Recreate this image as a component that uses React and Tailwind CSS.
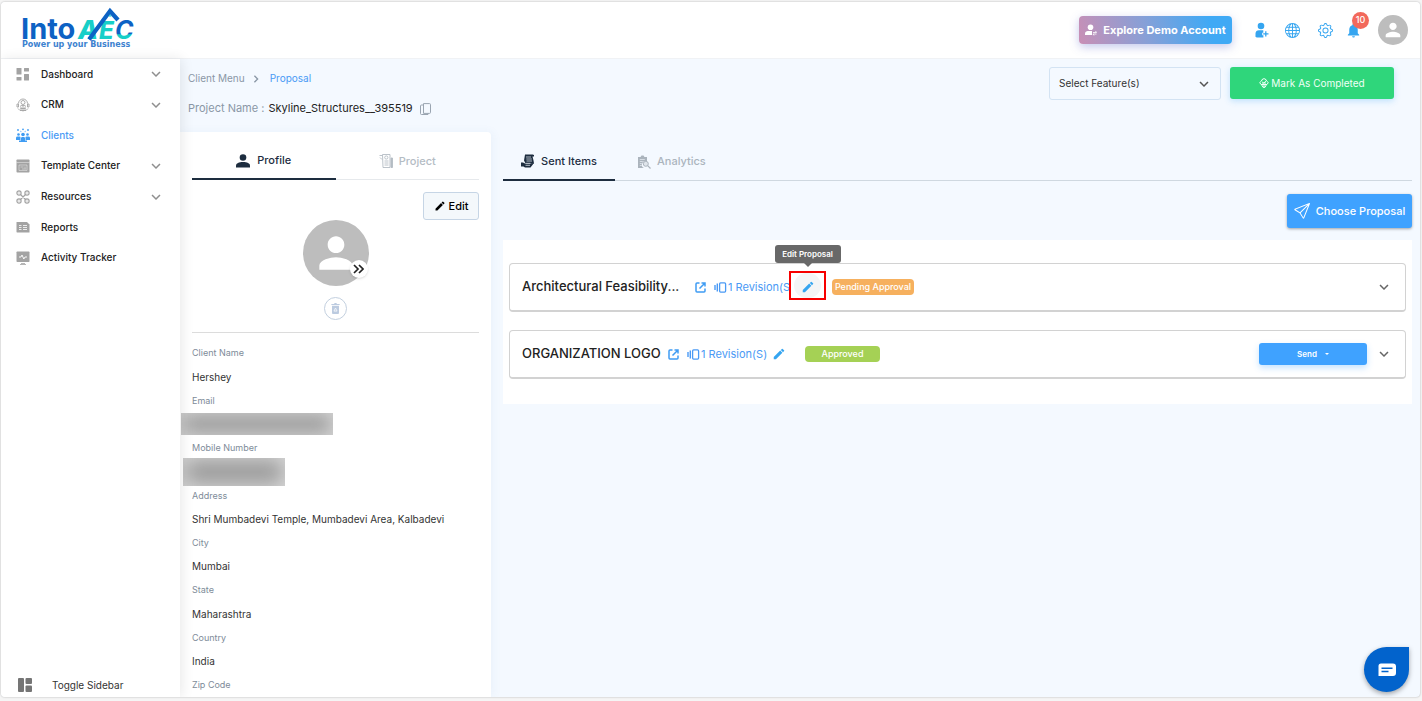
import React, { useState } from 'react';
import { MdEdit, MdKeyboardArrowDown, MdNotifications, MdPerson } from 'react-icons/md';
import { BsGear, BsGlobe, BsSend } from 'react-icons/bs';

const DashboardIcon = () => (
    <svg viewBox="0 0 14 14" className="w-3.5 h-3.5" fill="currentColor" aria-hidden="true">
        <rect x="0.5" y="1" width="5" height="6.5" rx="0.5" />
        <rect x="8" y="1" width="5" height="3.5" rx="0.5" />
        <rect x="0.5" y="10" width="5" height="3.5" rx="0.5" />
        <rect x="8" y="7" width="5" height="6.5" rx="0.5" />
    </svg>
);

const CrmIcon = () => (
    <svg viewBox="0 0 14 14" className="w-3.5 h-3.5" fill="none" stroke="currentColor" strokeWidth="0.9" aria-hidden="true">
        <path d="M2.5 5.5a4.5 4.5 0 0 1 9 0M1 6v3h1.5V6zM11.5 6v3H13V6z" />
        <circle cx="7" cy="4.5" r="2" />
        <path d="M4 8.5c.5-1.5 5.5-1.5 6 0M2 10.5l2 2h6l2-2M5 9v3.5M9 9v3.5M7 8v5.5M4.5 10.5h5" />
    </svg>
);

const ClientsIcon = () => (
    <svg viewBox="0 0 14 14" className="w-3.5 h-3.5" fill="currentColor" aria-hidden="true">
        <circle cx="2" cy="2" r="0.9" />
        <circle cx="7" cy="1.3" r="0.9" />
        <circle cx="12" cy="2" r="0.9" />
        <path d="M4 2.5l1.5 1L5 4.5zM10 2.5l-1.5 1 .5 1z" />
        <circle cx="2.5" cy="6.5" r="1.3" />
        <circle cx="11.5" cy="6.5" r="1.3" />
        <circle cx="7" cy="6.5" r="1.8" />
        <path d="M0 12V9.8a1.5 1.5 0 0 1 1.5-1.3h2A1.5 1.5 0 0 1 4.5 9v3zM9.5 12V9a1.5 1.5 0 0 1 1-.5h2A1.5 1.5 0 0 1 14 9.8V12zM5 14V10a1.2 1.2 0 0 1 1.2-1h1.6A1.2 1.2 0 0 1 9 10v4zM3 12.5h8V14H3z" />
    </svg>
);

const TemplateIcon = () => (
    <svg viewBox="0 0 14 14" className="w-3.5 h-3.5" aria-hidden="true">
        <rect x="0.5" y="0.5" width="13" height="13" rx="0.8" fill="currentColor" />
        <path d="M0.5 3.5h13M3 6h8v5.5H3zM4.5 8h3M6 10h4M9 7.5v2" stroke="#fff" strokeWidth="0.6" fill="none" opacity="0.7" />
    </svg>
);

const ResourcesIcon = () => (
    <svg viewBox="0 0 14 14" className="w-3.5 h-3.5" fill="none" stroke="currentColor" strokeWidth="1.2" aria-hidden="true">
        <circle cx="3" cy="3" r="2.1" />
        <circle cx="11" cy="3" r="2.1" />
        <circle cx="3" cy="11" r="2.1" />
        <circle cx="11" cy="11" r="2.1" />
        <path d="M4.5 4.5l5 5M9.5 4.5l-5 5M2.5 3h1M10.5 3h1M2.5 11h1M10.5 11h1" />
    </svg>
);

const ReportsIcon = () => (
    <svg viewBox="0 0 14 14" className="w-3.5 h-3.5" aria-hidden="true">
        <path d="M1 2h10l2.5 2.5v8H1a.6.6 0 0 1-.5-.5V2.5A.6.6 0 0 1 1 2z" fill="currentColor" />
        <path d="M3 5.5h2.5M3 7.5h2.5M3 9.5h2.5M7 5.5h4M7 7.5h4M7 9.5h4" stroke="#fff" strokeWidth="0.8" />
    </svg>
);

const ActivityIcon = () => (
    <svg viewBox="0 0 14 14" className="w-3.5 h-3.5" aria-hidden="true">
        <rect x="0.5" y="0.5" width="13" height="10.5" rx="0.8" fill="currentColor" />
        <path d="M5 12.5h4M4 13.5h6" stroke="currentColor" strokeWidth="0.8" />
        <path d="M3 6h2l1-2 1.8 4L9 6h2" stroke="#fff" strokeWidth="0.9" fill="none" />
    </svg>
);

const LayoutIcon = () => (
    <svg viewBox="0 0 14 14" className="w-3.5 h-3.5" fill="currentColor" aria-hidden="true">
        <rect x="0" y="0" width="6" height="14" rx="1" />
        <rect x="7.5" y="0" width="6.5" height="6" rx="1" />
        <rect x="7.5" y="7.5" width="6.5" height="6.5" rx="1" />
    </svg>
);

const UserPlusIcon = () => (
    <svg viewBox="0 0 14 16" className="w-3.5 h-4" fill="currentColor" aria-hidden="true">
        <circle cx="6" cy="4" r="3.3" />
        <path d="M.5 13.5v-2A3.5 3.5 0 0 1 4 8.3h4.3v2.5H7.2v2.4h1.2v2.2H2A1.5 1.5 0 0 1 .5 13.5z" />
        <path d="M10.8 9.2v5.4M8.2 11.9h5.3" stroke="currentColor" strokeWidth="1.3" />
    </svg>
);

const DemoUserIcon = () => (
    <svg viewBox="0 0 12 12" className="w-3 h-3" fill="currentColor" aria-hidden="true">
        <circle cx="5.5" cy="3.3" r="2.8" />
        <path d="M0 11V9.5C0 7.5 2 7 4 7h3v4z" />
        <path d="M8 8.5h3.5L10.5 7M11.5 10H8l1 1.5" stroke="currentColor" strokeWidth="0.8" fill="none" />
    </svg>
);

const PersonIcon = () => (
    <svg viewBox="0 0 14 14" className="w-3.5 h-3.5" fill="currentColor" aria-hidden="true">
        <circle cx="7" cy="3.5" r="3.3" />
        <path d="M0 13.5v-1.8C0 9 3 7.9 7 7.9s7 1.1 7 3.8v1.8z" />
    </svg>
);

const ProjectIcon = () => (
    <svg viewBox="0 0 14 14" className="w-3.5 h-3.5" fill="none" stroke="currentColor" strokeWidth="0.9" aria-hidden="true">
        <path d="M.5 1.5h3M1 3.5l2 2M3.5.5H11v13H4z" />
        <circle cx="7.3" cy="3.5" r="1.6" />
        <path d="M5.5 7h4M5.5 9h4M5.5 11h4" />
        <path d="M12 4h1.5v9.5H12z" fill="currentColor" />
    </svg>
);

const SentIcon = () => (
    <svg viewBox="0 0 14 14" className="w-3.5 h-3.5" aria-hidden="true">
        <path d="M4 .5h8a1.5 1.5 0 0 1 1 2h-1.5l1 4 .5 3H4.5L3 6.5z" fill="currentColor" />
        <path d="M0 8.5h2l2 1h4.5L13 9l-3.5 4.5H4l-1.5-1H0z" fill="currentColor" />
        <path d="M5 3h5M5.3 5h5.5M5.5 7H11M4.5 9.3h5M4.5 11.3H9" stroke="#f4f9ff" strokeWidth="0.7" />
    </svg>
);

const AnalyticsIcon = () => (
    <svg viewBox="0 0 14 14" className="w-3.5 h-3.5" aria-hidden="true">
        <path d="M1 2h2.500l1-1.500h2l1 1.500H10v4.500A3.500 3.500 0 0 0 7 13H1z" fill="currentColor" />
        <path d="M2.800 4.500h5M2.800 6.500h3M2.800 8.500h2M2.800 10.500h2" stroke="#f4f9ff" strokeWidth="0.6" />
        <circle cx="8.8" cy="8.8" r="2.5" fill="#dfe5eb" stroke="currentColor" strokeWidth="1" />
        <path d="M10.7 10.7l2.8 2.8" stroke="currentColor" strokeWidth="1.2" />
    </svg>
);

const CopyIcon = () => (
    <svg viewBox="0 0 11 12" className="w-[11px] h-3" fill="none" stroke="#9aa5b1" strokeWidth="1" aria-hidden="true">
        <path d="M3.5.6h6a1 1 0 0 1 1 1v7.8a1 1 0 0 1-1 1h-6z" />
        <path d="M3.5 2h-2a1 1 0 0 0-1 1v7.5a1 1 0 0 0 1 1H8v-1" />
    </svg>
);

const ExternalIcon = () => (
    <svg viewBox="0 0 11 11" className="w-[11px] h-[11px]" fill="none" stroke="currentColor" strokeWidth="1.5" aria-hidden="true">
        <path d="M4.5 1H2a1 1 0 0 0-1 1v7a1 1 0 0 0 1 1h7a1 1 0 0 0 1-1V6.500" />
        <path d="M6.5 1H10v3.5M10 1L4.5 6.5" />
    </svg>
);

const RevisionIcon = () => (
    <svg viewBox="0 0 13 11" className="w-[13px] h-[11px] shrink-0" fill="none" stroke="currentColor" aria-hidden="true">
        <path d="M1 3v5M3.3 1.5v8" strokeWidth="1.4" />
        <rect x="5.6" y="0.9" width="6" height="9.2" rx="1" strokeWidth="1.3" />
    </svg>
);

const BadgeCheckIcon = () => (
    <svg viewBox="0 0 10 10" className="w-2.5 h-2.5" fill="none" stroke="currentColor" strokeWidth="1" aria-hidden="true">
        <path d="M5 .6l2 1 .5 1.4 1.8 1.5L8 6.5H2L.7 4.5 2.5 3 3 1.6z" />
        <path d="M3.3 4l1.5 1.2L7 2.8M2.5 6.5L4 9.3h2l1.500-2.800M5 6v3.500M3 5h4" />
    </svg>
);

const BinIcon = () => (
    <svg viewBox="0 0 9 12" className="w-[9px] h-[11px]" aria-hidden="true">
        <path d="M0 1h3l.5-1h2L6 1h3v1.3H0zM.7 3h7.6v8a1 1 0 0 1-1 1H1.7a1 1 0 0 1-1-1z" fill="#bccbe0" />
        <path d="M2.8 8.8l1.7-3.3 1.7 3.3z" fill="none" stroke="#fff" strokeWidth="0.8" />
    </svg>
);

const DoubleChevron = () => (
    <svg viewBox="0 0 11 10" className="w-[11px] h-2.5" fill="none" stroke="#222" strokeWidth="1.7" aria-hidden="true">
        <path d="M1 1l4 4-4 4M6 1l4 4-4 4" />
    </svg>
);

const ChatIcon = () => (
    <svg viewBox="0 0 18 14" className="w-[18px] h-3.5" aria-hidden="true">
        <path d="M3 .5h12a3 3 0 0 1 3 3V10a3 3 0 0 1-3 3H.5V3A2.5 2.5 0 0 1 3 .5z" fill="#fff" />
        <path d="M3.5 5.3h11M3.5 8.5h7" stroke="#0263cc" strokeWidth="1.5" />
    </svg>
);

const Logo = () => (
    <svg viewBox="0 0 114 42" className="w-[114px] h-[42px] overflow-visible" role="img" aria-label="IntoAEC" fontFamily="Inter, sans-serif">
        <defs>
            <linearGradient id="cFill" x1="0" y1="0" x2="0" y2="1">
                <stop offset="0.62" stopColor="#0d62c4" />
                <stop offset="0.66" stopColor="#17cfc8" />
            </linearGradient>
        </defs>
        <text x="0" y="31" fontSize="29" fontWeight="700" fill="#0d62c4">Into</text>
        <text x="57" y="31" fontSize="26" fontWeight="800" fontStyle="italic" fill="#17cfc8">A</text>
        <text x="78" y="31" fontSize="24" fontWeight="800" fontStyle="italic" fill="#17cfc8">E</text>
        <text x="94" y="31" fontSize="25" fontWeight="700" fontStyle="italic" fill="url(#cFill)">C</text>
        <path d="M68 31.5L89 3l8 9" fill="none" stroke="#0d62c4" strokeWidth="4.2" />
        <path d="M87.5 8.5l1.5-2 1.5 2z" fill="#17cfc8" />
        <text x="1" y="39" fontSize="8" fontWeight="700" fontFamily="DejaVu Sans, sans-serif" fill="#3d82cf">Power up your Business</text>
    </svg>
);

const menu = [
    { label: 'Dashboard', icon: DashboardIcon, children: true },
    { label: 'CRM', icon: CrmIcon, children: true },
    { label: 'Clients', icon: ClientsIcon, active: true },
    { label: 'Template Center', icon: TemplateIcon, children: true },
    { label: 'Resources', icon: ResourcesIcon, children: true },
    { label: 'Reports', icon: ReportsIcon },
    { label: 'Activity Tracker', icon: ActivityIcon },
];

const fields = [
    { label: 'Client Name', value: 'Hershey' },
    { label: 'Email', hidden: 'email' },
    { label: 'Mobile Number', hidden: 'phone' },
    { label: 'Address', value: 'Shri Mumbadevi Temple, Mumbadevi Area, Kalbadevi' },
    { label: 'City', value: 'Mumbai' },
    { label: 'State', value: 'Maharashtra' },
    { label: 'Country', value: 'India' },
    { label: 'Zip Code', value: '' },
];

const Header = () => (
    <header className="flex h-[57px] shrink-0 items-center border-b border-[#f0f2f5] bg-white pl-5 pr-3">
        <a href="#home" className="self-start pt-1.5"><Logo /></a>
        <button className="ml-auto flex h-7 w-[153px] items-center justify-center gap-1.5 rounded bg-linear-[75deg] from-[#c98fb5] via-[#85a0d8] via-45% to-[#3fa9f5] to-85% text-[11px] font-bold whitespace-nowrap text-white shadow-[0_3px_10px_rgba(90,100,200,0.35)]">
            <DemoUserIcon />
            Explore Demo Account
        </button>
        <div className="ml-[23px] flex items-center text-[#35a5f0]">
            <button aria-label="Add user"><UserPlusIcon /></button>
            <button aria-label="Language" className="ml-4"><BsGlobe className="h-[15px] w-[15px]" /></button>
            <button aria-label="Settings" className="ml-[18px]"><BsGear className="h-[15px] w-[15px]" /></button>
            <button aria-label="Notifications" className="relative ml-3">
                <MdNotifications className="h-[17px] w-[17px]" />
                <span className="absolute -top-2.5 left-[7px] flex h-[17px] w-[17px] items-center justify-center rounded-full bg-[#f2695c] text-[9px] font-medium text-white">10</span>
            </button>
            <button aria-label="Account" className="ml-4 flex h-[30px] w-[30px] items-center justify-center rounded-full bg-[#bdbdbd] text-white">
                <MdPerson className="h-[22px] w-[22px]" />
            </button>
        </div>
    </header>
);

const Sidebar = () => (
    <aside className="z-10 flex w-[179px] shrink-0 flex-col bg-white shadow-[2px_0_12px_rgba(0,0,0,0.09)]">
        <nav className="flex h-[214px] flex-col justify-between">
            {menu.map(({ label, icon: Icon, children, active }) => (
                <a
                    key={label}
                    href="#menu"
                    className={active ? 'flex h-[30px] items-center px-[15px] text-[#4a9af5]' : 'flex h-[30px] items-center px-[15px] text-[#222]'}
                >
                    <span className={active ? 'text-[#3f9cf3]' : 'text-[#a3a3a3]'}><Icon /></span>
                    <span className="ml-[11px] text-[10px] font-medium">{label}</span>
                    {children && <MdKeyboardArrowDown className="ml-auto h-[18px] w-[18px] text-[#8f8f8f]" />}
                </a>
            ))}
        </nav>
        <button className="mt-auto flex h-6 items-center pl-[17px] text-[10px] text-[#333]">
            <span className="text-[#757575]"><LayoutIcon /></span>
            <span className="ml-5">Toggle Sidebar</span>
        </button>
    </aside>
);

const Toolbar = () => (
    <div className="flex items-start justify-between pt-2 pr-[26px] pl-2">
        <div className="pt-0.5">
            <nav className="flex h-[19px] items-center text-[10px] text-[#8a97a6]">
                <a href="#clients">Client Menu</a>
                <svg viewBox="0 0 6 10" className="mr-[11px] ml-2 h-2 w-1.5" fill="none" stroke="#8a97a6" strokeWidth="1.7" aria-hidden="true">
                    <path d="M1 1l4 4-4 4" />
                </svg>
                <a href="#proposal" className="text-[#4a9af5]">Proposal</a>
            </nav>
            <div className="mt-[11px] flex h-[19px] items-center text-[11px] text-[#8a97a6]">
                Project Name :
                <span className="ml-1 text-[#222]">Skyline_Structures__395519</span>
                <button aria-label="Copy project name" className="ml-[7px]"><CopyIcon /></button>
            </div>
        </div>
        <div className="flex gap-[9px]">
            <div className="relative">
                <select aria-label="Select Feature(s)" className="h-[33px] w-[172px] appearance-none rounded-[3px] border border-[#d3e3f3] bg-transparent pl-[9px] text-[10px] text-[#333]">
                    <option>Select Feature(s)</option>
                </select>
                <MdKeyboardArrowDown className="pointer-events-none absolute top-2 right-2 h-[18px] w-[18px] text-[#555]" />
            </div>
            <button className="flex h-8 w-[164px] items-center justify-center gap-0.5 rounded-[3px] bg-[#2fd67b] text-[10px] text-[#f1fff7] shadow-[0_2px_6px_rgba(63,169,245,0.3)]">
                <BadgeCheckIcon />
                Mark As Completed
            </button>
        </div>
    </div>
);

const Profile = () => (
    <section className="flex w-[311px] shrink-0 flex-col overflow-hidden rounded-tr bg-white px-3 shadow-[2px_0_10px_rgba(60,120,190,0.06)]">
        <div className="mt-[11px] flex h-[37px] shrink-0 border-b border-[#e6e9ec] text-[11px] font-medium">
            <button className="-mb-px flex flex-1 items-center justify-center gap-[7px] border-b-2 border-[#1d2d3f] text-[#1d2d3f]">
                <PersonIcon />
                Profile
            </button>
            <button className="flex flex-1 items-center justify-center gap-1.5 text-[#b4bcc4]">
                <ProjectIcon />
                Project
            </button>
        </div>
        <button className="mt-3 flex h-7 w-14 shrink-0 items-center justify-center gap-[3px] self-end rounded-[3px] border border-[#c6d5e5] bg-[#f4f8fb] text-[11px] font-medium text-black">
            <MdEdit className="h-3 w-3" />
            Edit
        </button>
        <div className="relative flex h-[66px] w-[66px] shrink-0 items-center justify-center self-center rounded-full bg-[#bdbdbd] text-white">
            <MdPerson className="h-[50px] w-[50px]" />
            <button aria-label="Change photo" className="absolute right-px bottom-2 flex h-[18px] w-[18px] items-center justify-center rounded-full bg-white shadow-sm">
                <DoubleChevron />
            </button>
        </div>
        <button aria-label="Delete photo" className="mt-[11px] flex h-[23px] w-[23px] shrink-0 items-center justify-center self-center rounded-full border border-[#c3d0df]">
            <BinIcon />
        </button>
        <hr className="mt-3 border-[#dcdcdc]" />
        <dl className="mt-2 flex h-[379px] shrink-0 flex-col justify-between">
            {fields.map((field) => (
                <div key={field.label} className="h-[47px]">
                    <dt className="flex h-6 items-center text-[9px] text-[#7e8b99]">{field.label}</dt>
                    <dd className="flex h-6 items-center text-[10px] text-[#333]">
                        {field.hidden === 'email' && (
                            <span className="-ml-[11px] block h-[22px] w-[152px] bg-[#979797] shadow-[inset_0_0_18px_2px_#d8d8d8]" />
                        )}
                        {field.hidden === 'phone' && (
                            <span className="-ml-[9px] block h-7 w-[102px] shrink-0 bg-[#979797] shadow-[inset_0_0_20px_2px_#dcdcdc]" />
                        )}
                        {field.value}
                    </dd>
                </div>
            ))}
        </dl>
    </section>
);

const Row = ({ children }) => (
    <article className="flex h-[49px] items-center rounded-sm border border-b-2 border-[#d2d2d2] bg-white px-3">
        {children}
        <button aria-label="Expand"><MdKeyboardArrowDown className="h-[18px] w-[18px] text-[#666]" /></button>
    </article>
);

const Proposals = () => (
    <section className="ml-3 min-w-0 flex-1 pr-2">
        <div className="mt-[11px] flex h-[38px] border-b border-[#cfd8e0] text-[11px] font-medium">
            <button className="-mb-px flex w-28 items-center justify-center gap-1.5 border-b-2 border-[#1d2d3f] text-[#1d2d3f]">
                <SentIcon />
                Sent Items
            </button>
            <button className="ml-[22px] flex items-center gap-1.5 text-[#abb4bd]">
                <AnalyticsIcon />
                Analytics
            </button>
        </div>
        <div className="mt-[13px] flex justify-end">
            <button className="flex h-[34px] w-[125px] items-center justify-center gap-1.5 rounded-[3px] bg-[#3fa2ff] text-[11px] font-medium whitespace-nowrap text-white shadow-[0_1px_3px_rgba(0,0,0,0.35)]">
                <BsSend className="h-4 w-4 shrink-0" />
                Choose Proposal
            </button>
        </div>
        <div className="mt-3 flex flex-col gap-[18px] bg-white px-1.5 pt-[23px] pb-[25px]">
            <Row>
                <h2 className="w-[165px] text-[13px] font-medium whitespace-nowrap text-[#222]">Architectural Feasibility...</h2>
                <a href="#open" aria-label="Open proposal" className="ml-2 text-[#3f9cf3]"><ExternalIcon /></a>
                <a href="#revisions" className="ml-2 flex w-[75px] items-center gap-px text-[11px] whitespace-nowrap text-[#4a9af5]">
                    <RevisionIcon />
                    1 Revision(S)
                </a>
                <div className="relative z-10 mt-[7px] flex h-[29px] w-[37px] items-center justify-center self-start border-2 border-[#f70000] bg-white">
                    <button aria-label="Edit Proposal" className="flex h-[25px] w-[27px] items-center justify-center rounded-full bg-[#f4f5f6] pt-0.5 text-[#35a5f0]">
                        <MdEdit className="h-3.5 w-3.5" />
                    </button>
                    <div role="tooltip" className="absolute -top-7 left-1/2 flex h-[18px] w-[66px] -translate-x-1/2 items-center justify-center rounded-[3px] bg-[#686868] text-[8px] font-semibold whitespace-nowrap text-white">
                        Edit Proposal
                        <span className="absolute top-full left-1/2 -translate-x-1/2 border-x-4 border-t-4 border-x-transparent border-t-[#686868]" />
                    </div>
                </div>
                <span className="mr-auto ml-1.5 flex h-4 w-[82px] items-center justify-center rounded-sm bg-[#f6b05e] text-[9px] font-medium whitespace-nowrap text-white">Pending Approval</span>
            </Row>
            <Row>
                <h2 className="w-[138px] text-[13px] font-medium whitespace-nowrap text-[#222]">ORGANIZATION LOGO</h2>
                <a href="#open" aria-label="Open proposal" className="ml-2 text-[#3f9cf3]"><ExternalIcon /></a>
                <a href="#revisions" className="ml-2 flex w-[85px] items-center gap-px text-[11px] whitespace-nowrap text-[#4a9af5]">
                    <RevisionIcon />
                    1 Revision(S)
                </a>
                <button aria-label="Edit Proposal" className="text-[#35a5f0]"><MdEdit className="h-3.5 w-3.5" /></button>
                <span className="mr-auto ml-[19px] flex h-4 w-[75px] items-center justify-center rounded-sm bg-[#a5d155] text-[9px] font-medium text-white">Approved</span>
                <button className="mr-2 flex h-[22px] w-[108px] items-center justify-center gap-2 rounded-[3px] bg-[#3fa2ff] text-[8px] font-semibold text-white shadow-[0_3px_6px_rgba(63,162,255,0.3)]">
                    Send
                    <span className="border-x-2 border-t-2 border-x-transparent border-t-white" />
                </button>
            </Row>
        </div>
    </section>
);

const App = () => {
    const [chatOpen, setChatOpen] = useState(false);

    return (
        <div className="flex h-screen flex-col bg-[#f5f5f5] pt-0.5 pr-0.5 pb-1 pl-px font-['Inter',sans-serif]">
            <div className="relative flex min-h-0 flex-1 flex-col overflow-hidden rounded bg-[#f4f9ff] shadow-[0_0_2px_rgba(0,0,0,0.3)]">
                <Header />
                <div className="flex min-h-0 flex-1">
                    <Sidebar />
                    <main className="flex min-w-0 flex-1 flex-col">
                        <Toolbar />
                        <div className="mt-3.5 flex min-h-0 flex-1">
                            <Profile />
                            <Proposals />
                        </div>
                    </main>
                </div>
                <button
                    aria-label="Chat"
                    aria-expanded={chatOpen}
                    onClick={() => setChatOpen(!chatOpen)}
                    className="absolute right-[11px] bottom-[5px] flex h-[45px] w-[45px] items-center justify-center rounded-full rounded-tr-md bg-[#0263cc] shadow-[0_2px_5px_rgba(0,0,0,0.35)]"
                >
                    <ChatIcon />
                </button>
            </div>
        </div>
    );
};

export default App;
